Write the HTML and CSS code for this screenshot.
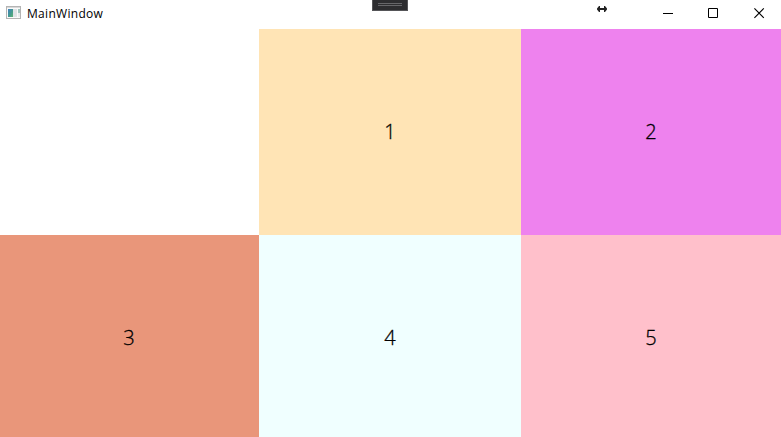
FILE: index.html
```html
<!DOCTYPE html>
<html lang="en">
<head>
<meta charset="utf-8">
<title>MainWindow</title>
<link rel="stylesheet" href="styles.css">
</head>
<body>
<div class="window">
  <header class="titlebar">
    <svg class="app-icon" width="15" height="13" viewBox="0 0 15 13" shape-rendering="crispEdges">
      <defs><linearGradient id="pane" x1="0" y1="0" x2="1" y2="1"><stop offset="0" stop-color="#3f7fc0"/><stop offset="0.6" stop-color="#459c8c"/><stop offset="1" stop-color="#62b474"/></linearGradient></defs>
      <rect x="0.5" y="0.5" width="14" height="12" fill="#fafafa" stroke="#b4b4b4"/>
      <rect x="1" y="1" width="13" height="1" fill="#d8d8d8"/>
      <rect x="2" y="3" width="5" height="8" fill="url(#pane)"/>
      <rect x="7" y="3" width="4" height="8" fill="#dfe3e6"/>
      <rect x="12" y="3" width="2" height="4" fill="#9fc4bd"/>
      <rect x="12" y="7" width="2" height="4" fill="#e8ebed"/>
    </svg>
    <span class="title">MainWindow</span>
    <svg class="resize" width="12" height="8" viewBox="0 0 12 8"><path d="M1 3.5 3 1h1v2h4V1h1l2 2.5v1L9 7H8V5H4v2H3L1 4.5Z" fill="#222"/></svg>
    <div class="controls">
      <svg width="11" height="11" viewBox="0 0 11 11"><path d="M0 5.5h10" stroke="#000"/></svg>
      <svg width="11" height="11" viewBox="0 0 11 11"><path d="M.5.5h9v9h-9z" fill="none" stroke="#000"/></svg>
      <svg width="11" height="11" viewBox="0 0 11 11"><path d="m.4.4 9.4 9.4m0-9.4L.4 9.8" stroke="#000" stroke-width="1.15"/></svg>
    </div>
    <div class="debug-handle"><i></i><i></i></div>
  </header>
  <main class="grid">
    <div class="cell"></div>
    <div class="cell moccasin">1</div>
    <div class="cell violet">2</div>
    <div class="cell salmon">3</div>
    <div class="cell azure">4</div>
    <div class="cell pink">5</div>
  </main>
</div>
</body>
</html>
```
FILE: styles.css
```css
* { box-sizing: border-box; }
body { margin: 0; background: #fff; color: #000; font-family: "Open Sans", "Noto Sans", sans-serif; overflow: hidden; }
.window { display: flex; flex-direction: column; width: 781px; height: 437px; overflow: hidden; }
.titlebar { position: relative; display: flex; flex: 0 0 29px; align-items: flex-start; padding-left: 6px; }
.titlebar svg { display: block; }
.app-icon { margin-top: 6px; }
.title { margin: 5px 0 0 6px; font-size: 12px; line-height: 17px; letter-spacing: .3px; }
.resize { margin: 5px 0 0 auto; }
.controls { display: flex; gap: 34px; margin: 8px 16px 0 55px; }
.controls svg:last-child { margin-left: 1px; }
.debug-handle { position: absolute; left: 372px; top: 0; width: 36px; height: 11px; padding: 3px 5px 0; background: #2d2d30; border: 1px solid #555558; border-top: 0; }
.debug-handle i { display: block; height: 1px; margin-bottom: 1px; background: #666669; }
.grid { display: grid; flex: none; grid-template-columns: 259px 262px 260px; grid-template-rows: 206px 206px; }
.cell { display: flex; align-items: center; justify-content: center; font-size: 20px; font-weight: 300; line-height: 28px; -webkit-text-stroke: .3px #000; }
.moccasin { background: #ffe4b5; }
.violet { background: #ee82ee; }
.salmon { padding-right: 1px; background: #e9967a; }
.azure { background: #f0ffff; }
.pink { background: #ffc0cb; }
```
